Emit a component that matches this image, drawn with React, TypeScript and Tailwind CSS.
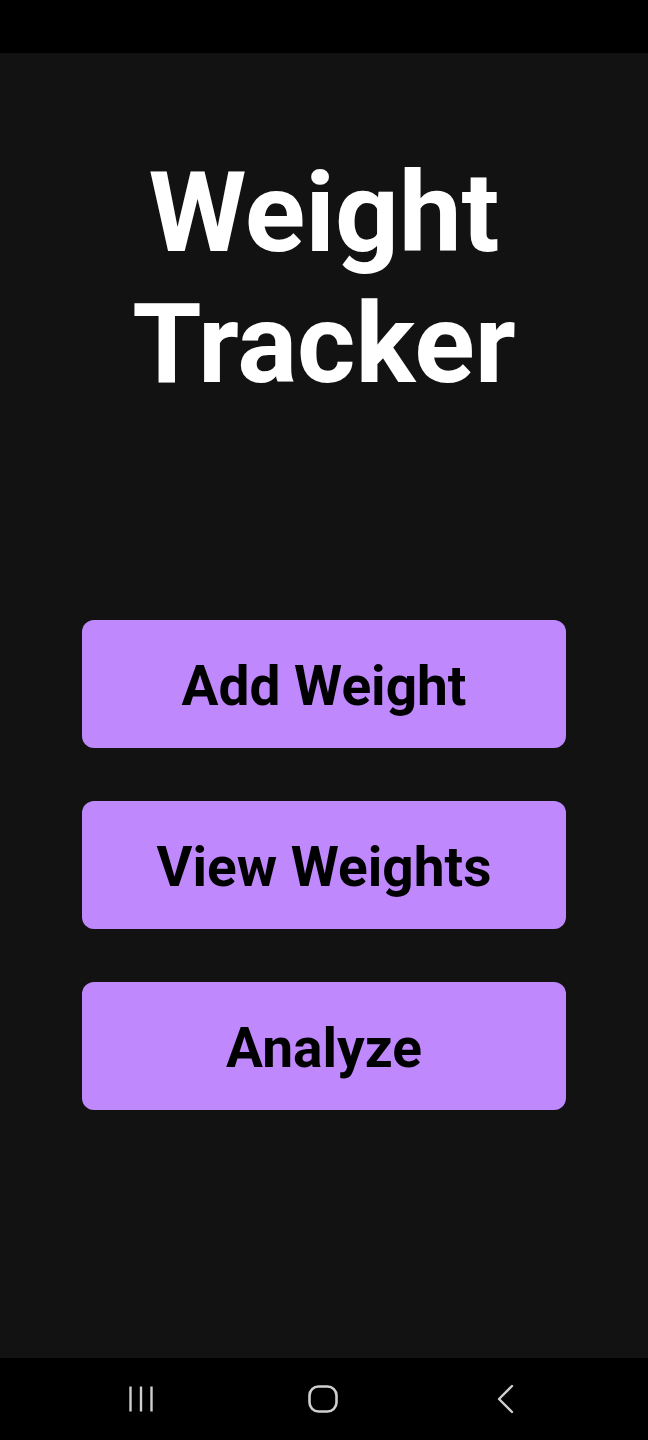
import React from "react";

export default function App() {
  const buttons = ["Add Weight", "View Weights", "Analyze"];
  return (
    <div className="flex h-[1440px] w-[648px] flex-col bg-black font-['Roboto',sans-serif]">
      <div className="h-[53px] bg-black" />
      <div className="flex flex-1 flex-col items-center bg-[#121212]">
        <h1 className="mt-[94px] text-center text-[112px] font-bold leading-[131px] text-white">
          Weight
          <br />
          Tracker
        </h1>
        <div className="mt-[211px] flex flex-col gap-[53px]">
          {buttons.map((b) => (
            <button
              key={b}
              className="flex h-[128px] w-[484px] items-center justify-center rounded-[12px] bg-[#bf88fc] pt-[4px] text-[55px] font-bold text-black"
            >
              {b}
            </button>
          ))}
        </div>
      </div>
      <div className="flex h-[82px] items-center bg-black pl-[128px] text-[#cfcfcf]">
        <svg width="26" height="26" viewBox="0 0 26 26">
          <line x1="2.5" y1="0.5" x2="2.5" y2="25.5" stroke="currentColor" strokeWidth="2.4" />
          <line x1="13" y1="0.5" x2="13" y2="25.5" stroke="currentColor" strokeWidth="2.4" />
          <line x1="23.5" y1="0.5" x2="23.5" y2="25.5" stroke="currentColor" strokeWidth="2.4" />
        </svg>
        <svg width="30" height="28" viewBox="0 0 30 28" className="ml-[154px]">
          <rect x="1.5" y="1.5" width="27" height="25" rx="9" fill="none" stroke="currentColor" strokeWidth="2.6" />
        </svg>
        <svg width="18" height="30" viewBox="0 0 18 30" className="ml-[158px]">
          <polyline points="16,2 3,15 16,28" fill="none" stroke="currentColor" strokeWidth="2.4" strokeLinecap="round" strokeLinejoin="round" />
        </svg>
      </div>
    </div>
  );
}
